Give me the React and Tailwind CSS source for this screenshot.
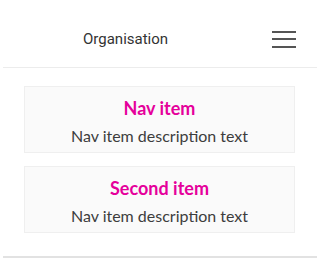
import React from "react";

const items = [
  { title: "Nav item", desc: "Nav item description text" },
  { title: "Second item", desc: "Nav item description text" },
];

const App = () => {
  return (
    <div className="w-[320px] h-[261px] bg-white overflow-hidden">
      <header className="mx-[3px] h-[68px] flex items-center justify-between border-b border-[#ececec] pl-[80px] pr-[21px] pt-[11px]">
        <span className="text-[15px] text-[#333] font-['Roboto',sans-serif]">
          Organisation
        </span>
        <button className="w-6 flex flex-col gap-[5.5px]">
          <span className="block h-[2px] bg-[#555]" />
          <span className="block h-[2px] bg-[#555]" />
          <span className="block h-[2px] bg-[#555]" />
        </button>
      </header>
      <nav className="flex flex-col gap-[13px] mx-[24px] mt-[18px] font-['Lato',sans-serif]">
        {items.map((item) => (
          <a
            key={item.title}
            className="h-[67px] w-[271px] flex flex-col items-center justify-center bg-[#fafafa] border border-[#efefef] pt-[4px]"
          >
            <span className="text-[18px] font-bold text-[#e5009b] leading-[22px]">
              {item.title}
            </span>
            <span className="text-[16px] text-[#3d3d3d] leading-[22px] mt-[6px]">
              {item.desc}
            </span>
          </a>
        ))}
      </nav>
      <div className="mx-[3px] mt-[23px] h-[2px] bg-[#e2e2e2]" />
    </div>
  );
};

export default App;
